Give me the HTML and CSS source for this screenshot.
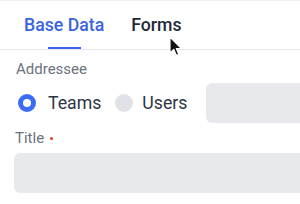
FILE: index.html
```html
<!DOCTYPE html>
<html>
<head>
<meta charset="utf-8">
<link rel="stylesheet" href="styles.css">
</head>
<body>
<div class="page">
  <div class="tabs">
    <div class="tab active">Base Data<span class="bar"></span></div>
    <div class="tab">Forms</div>
  </div>
  <div class="content">
    <div class="label">Addressee</div>
    <div class="radio-row">
      <div class="radio checked"><span class="dot"></span><span class="rtext">Teams</span></div>
      <div class="radio"><span class="dot"></span><span class="rtext">Users</span></div>
      <div class="input select"></div>
    </div>
    <div class="label title">Title<span class="req"></span></div>
    <div class="input"></div>
  </div>
  <svg class="cursor" width="14" height="22" viewBox="0 0 14 22">
    <path d="M1 1 L1 17 L4.8 13.4 L7.4 19.4 L9.8 18.4 L7.3 12.5 L12.4 12.5 Z" fill="#111" stroke="#fff" stroke-width="1.2" stroke-linejoin="round"/>
  </svg>
</div>
</body>
</html>
```
FILE: styles.css
```css
html, body {
  margin: 0;
  padding: 0;
  background: #fff;
}
.page {
  position: relative;
  width: 300px;
  height: 204px;
  overflow: hidden;
  font-family: Roboto, "Liberation Sans", sans-serif;
  border-top: 1px solid #f1f2f4;
  box-sizing: border-box;
}
.tabs {
  display: flex;
  gap: 27px;
  padding-left: 24px;
  height: 48px;
  border-bottom: 1px solid #e6e7ea;
}
.tab {
  position: relative;
  font-size: 17.7px;
  font-weight: 500;
  color: #1f2937;
  padding-top: 13px;
  line-height: 22px;
}
.tab.active {
  color: #3b63e0;
}
.bar {
  position: absolute;
  left: 50%;
  bottom: 0;
  width: 33px;
  margin-left: -16px;
  height: 2px;
  background: #3b66f0;
}
.content {
  padding: 9px 0 0 16px;
}
.label {
  font-size: 15px;
  line-height: 20px;
  color: #6b7280;
  display: flex;
  align-items: center;
}
.radio-row {
  display: flex;
  align-items: center;
  height: 40px;
  margin-top: 4px;
}
.radio {
  display: flex;
  align-items: center;
  gap: 12px;
  margin-right: 14px;
}
.radio .dot {
  width: 18px;
  height: 18px;
  border-radius: 50%;
  background: #e0e2e7;
  box-sizing: border-box;
}
.radio.checked .dot {
  margin-left: 2px;
  background: #fff;
  border: 5.5px solid #3b6cf4;
}
.rtext {
  font-size: 17.7px;
  color: #2d3544;
}
.radio + .radio { gap: 9px; margin-right: 19px; }
.input {
  height: 40px;
  background: #e8e9ed;
  border-radius: 6px;
  flex: 1;
  margin-right: -10px;
}
.title {
  margin-top: 5px;
  margin-left: -1px;
}
.req {
  width: 3px;
  height: 3px;
  border-radius: 50%;
  background: #e23a1f;
  margin-left: 6px;
}
.title + .input {
  margin-top: 5px;
  margin-left: -2px;
}
.cursor {
  position: absolute;
  left: 169px;
  top: 35px;
}
```
